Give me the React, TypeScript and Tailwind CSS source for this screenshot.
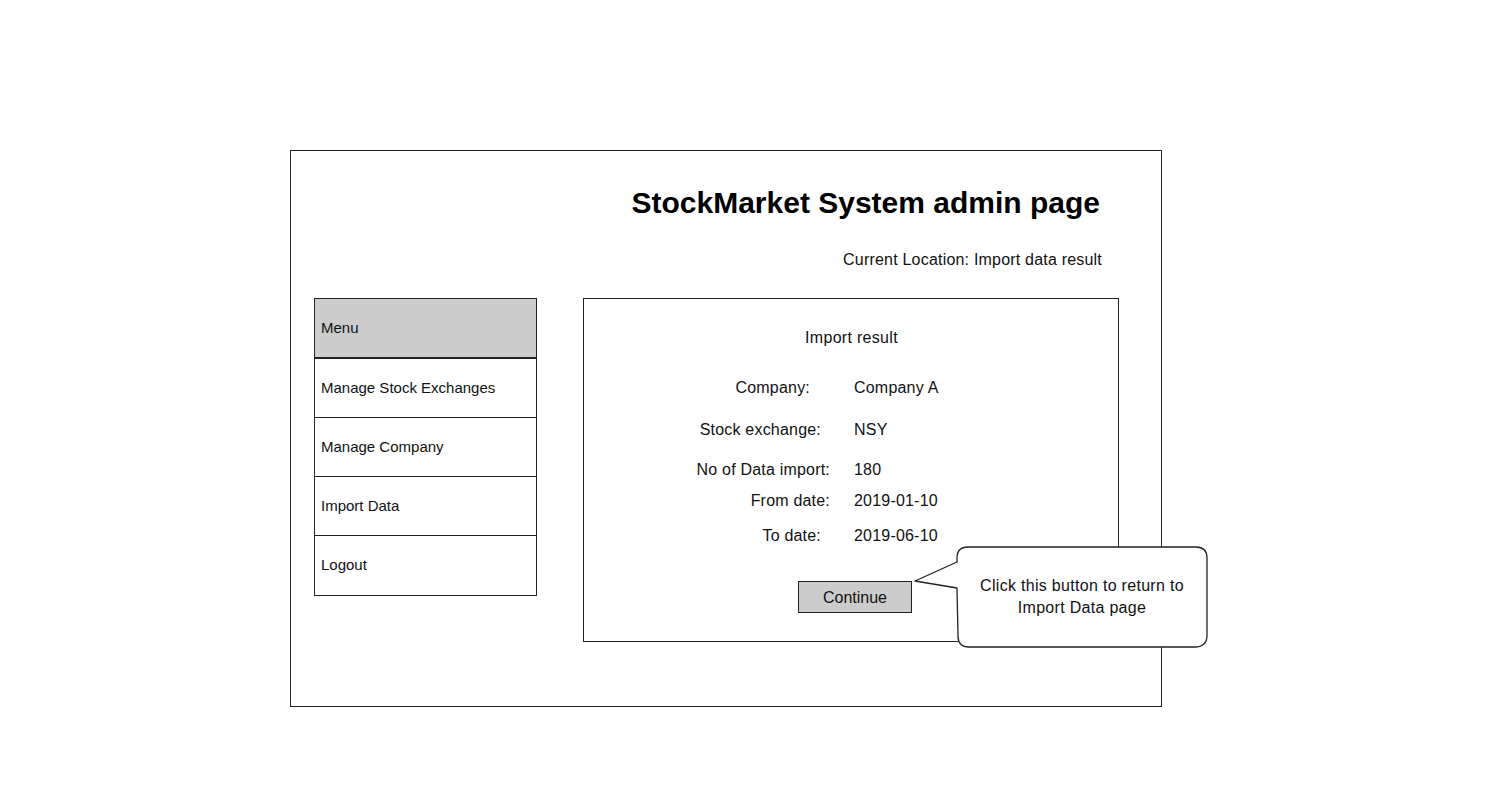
import React from 'react';

const sketch = { fontFamily: "'Comic Sans MS', 'Liberation Sans', sans-serif" };

const menuItems = ['Manage Stock Exchanges', 'Manage Company', 'Import Data', 'Logout'];

const rows: { label: string; value: string; pr: string; h: string }[] = [
  { label: 'Company:', value: 'Company A', pr: 'pr-[20px]', h: 'h-[42px]' },
  { label: 'Stock exchange:', value: 'NSY', pr: 'pr-[9px]', h: 'h-[40px]' },
  { label: 'No of Data import:', value: '180', pr: 'pr-0', h: 'h-[31px]' },
  { label: 'From date:', value: '2019-01-10', pr: 'pr-0', h: 'h-[35px]' },
  { label: 'To date:', value: '2019-06-10', pr: 'pr-[9px]', h: 'h-[30px]' },
];

export default function App() {
  return (
    <div className="w-full h-[800px] bg-white pt-[150px] pl-[290px] text-[16px] text-[#111]" style={sketch}>
      {/* main frame */}
      <div className="relative w-[872px] h-[557px] border border-[#222]">
        <h1
          className="mt-[35px] pr-[61px] text-right text-[30px] font-bold leading-[34px] text-black"
          style={{ fontFamily: "'Liberation Sans', Arial, sans-serif" }}
        >
          StockMarket System admin page
        </h1>
        <div className="mt-[30px] pr-[59px] text-right leading-[20px] tracking-[0.2px]">
          Current Location: Import data result
        </div>

        <div className="flex items-start mt-[28px] pl-[23px] gap-[46px]">
          {/* menu */}
          <div className="w-[223px] border border-[#222] flex flex-col text-[15px]">
            <div className="h-[60px] bg-[#cccccc] border-b-2 border-[#222] flex items-center px-[6px]">Menu</div>
            {menuItems.map((m, i) => (
              <div
                key={m}
                className={`h-[59px] flex items-center px-[6px] ${i < menuItems.length - 1 ? 'border-b border-[#222]' : ''}`}
              >
                {m}
              </div>
            ))}
          </div>

          {/* result panel */}
          <div className="w-[536px] h-[344px] border border-[#222] flex flex-col">
            <div className="mt-[29px] text-center pl-[1px] leading-[20px] tracking-[0.3px]">Import result</div>
            <div className="mt-[30px] flex flex-col">
              {rows.map((r) => (
                <div key={r.label} className={`flex ${r.h}`}>
                  <div className={`w-[246px] text-right leading-[20px] tracking-[0.2px] ${r.pr}`}>{r.label}</div>
                  <div className="pl-[24px] leading-[20px] tracking-[0.2px]">{r.value}</div>
                </div>
              ))}
            </div>
            <div className="mt-[25px] pl-[214px]">
              <button className="w-[114px] h-[32px] bg-[#cccccc] border border-[#222] leading-[20px] pt-[2px]">
                Continue
              </button>
            </div>
          </div>
        </div>

        {/* callout */}
        <div className="absolute left-[622px] top-[395px] w-[296px] h-[102px]">
          <svg className="absolute left-0 top-0" width="296" height="102" viewBox="0 0 296 102">
            <path
              d="M44 12 Q44 1 55 1 L283 1 Q294 1 294 12 L294 89 Q294 101 282 101 L56 101 Q45 101 45 90 L44 42 L2 35 L44 16 Z"
              fill="white"
              stroke="#222"
              strokeWidth="1.3"
              strokeLinejoin="round"
            />
          </svg>
          <div className="absolute left-[44px] top-0 w-[250px] h-[102px] flex items-center justify-center text-center leading-[22px] text-[16px] tracking-[0.3px]">
            <span>
              Click this button to return to
              <br />
              Import Data page
            </span>
          </div>
        </div>
      </div>
    </div>
  );
}
